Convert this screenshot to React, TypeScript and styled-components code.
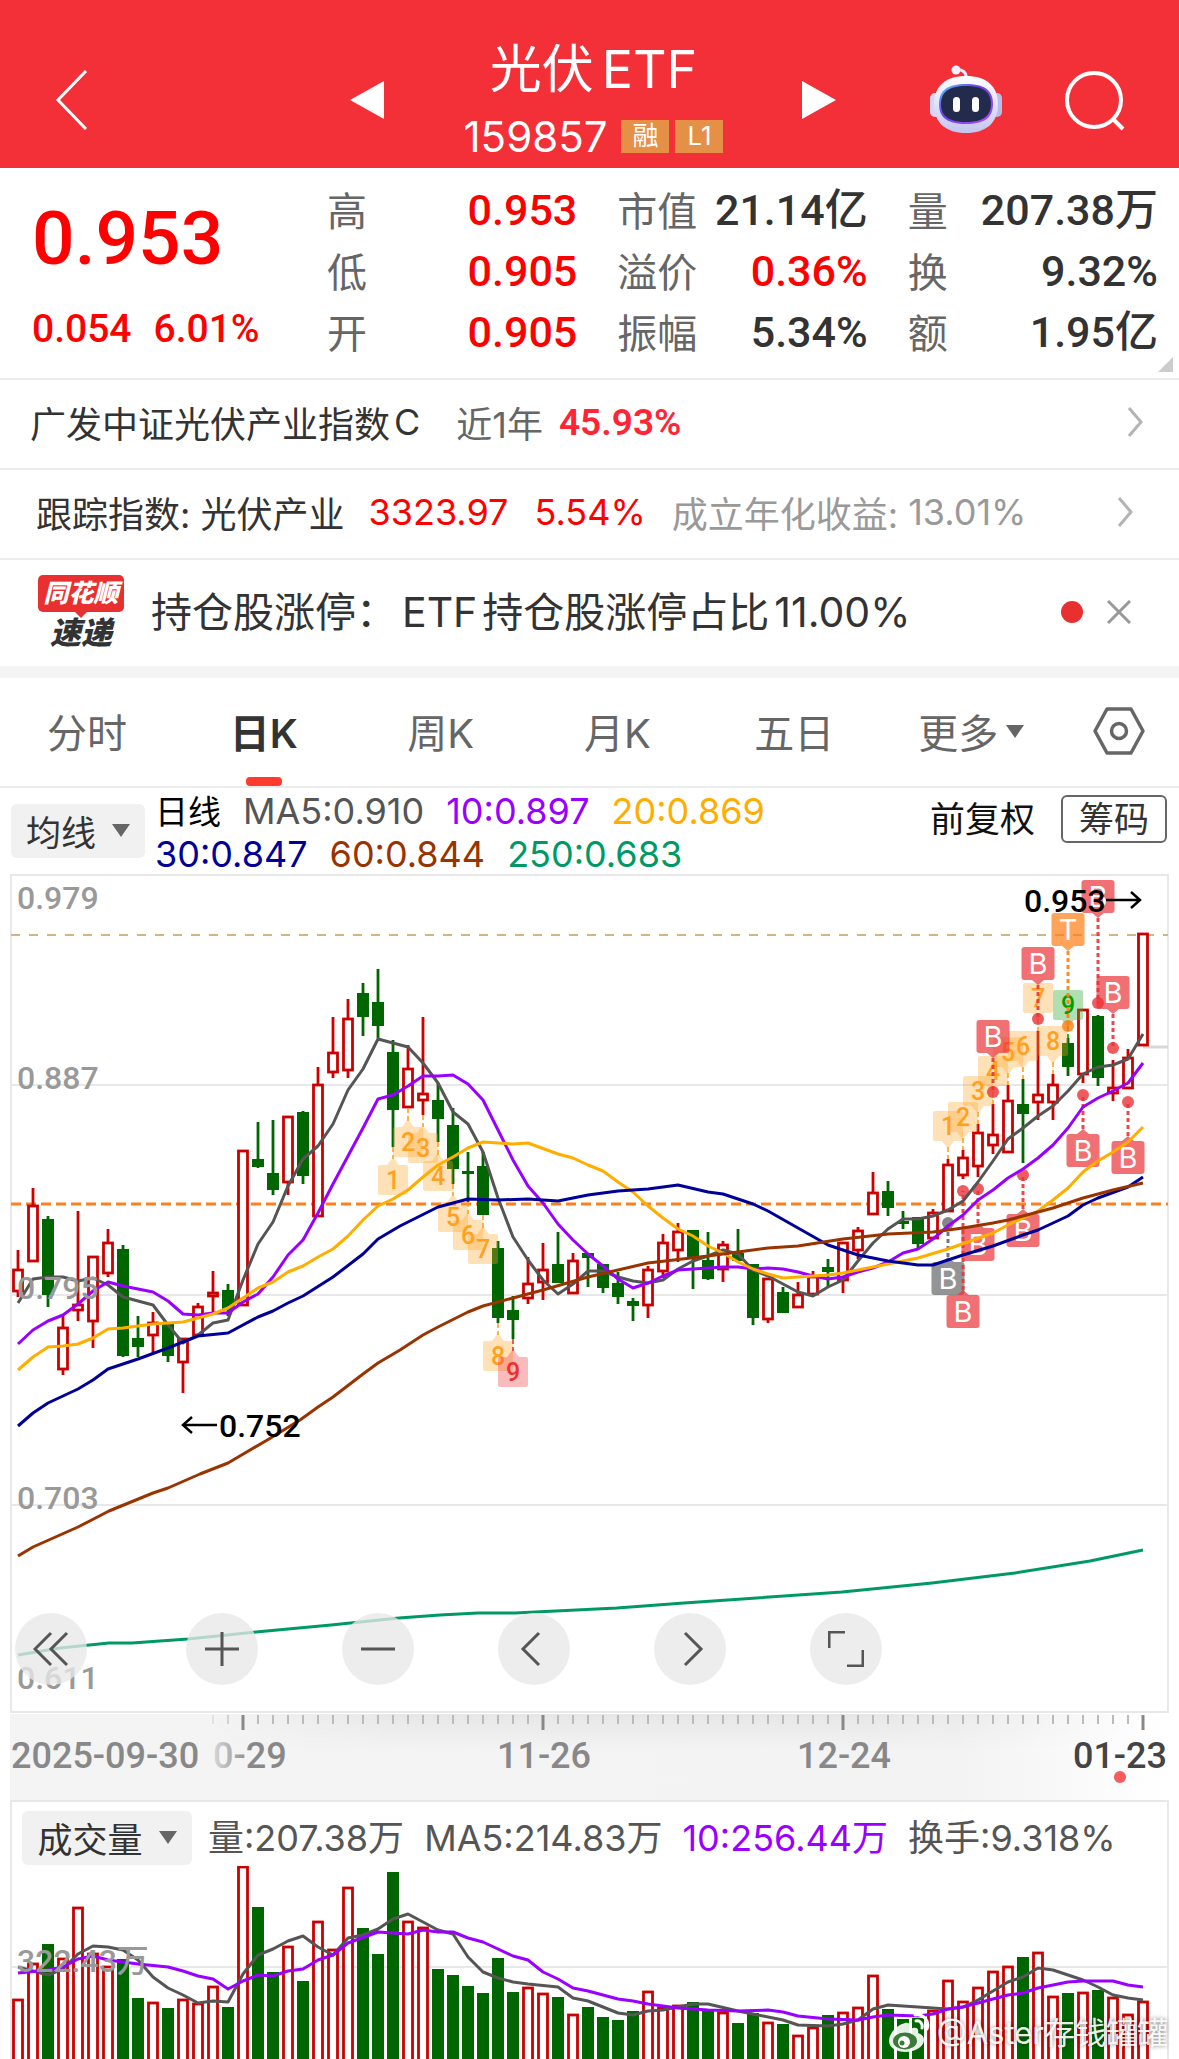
import React from "react";
import styled, { createGlobalStyle } from "styled-components";

const GlobalStyle = createGlobalStyle`
  * { box-sizing: border-box; }
  body { margin: 0; background: #fff; }
  button { border: 0; padding: 0; margin: 0; background: none; font: inherit; color: inherit; cursor: pointer; }
  svg { display: block; }
`;

const UI = `Inter, "Noto Sans CJK SC", sans-serif`;
const NUM = `Roboto, "Noto Sans CJK SC", sans-serif`;
const RED = "#ff0000";

const Page = styled.main`
  font-family: ${UI};
  color: #333;
  background: #fff;
  overflow: hidden;
`;

/* ---------- header ---------- */
const Header = styled.header`
  display: grid;
  grid-template-columns: 1fr 494px 1fr;
  height: 168px;
  padding-top: 36px;
  background: #f32f38;
  color: #fff;
`;
const HeaderSide = styled.div<{ $end?: boolean }>`
  display: flex;
  align-items: center;
  justify-content: ${(p) => (p.$end ? "flex-end" : "flex-start")};
  gap: 62px;
  padding: 0 53px 4px;
`;
const HeaderMiddle = styled.div`
  display: flex;
  align-items: center;
  justify-content: space-between;
`;
const StepButton = styled.button`
  padding-bottom: 4px;
`;
const TitleBlock = styled.div`
  display: flex;
  flex-direction: column;
  align-items: center;
`;
const Title = styled.h1`
  display: flex;
  gap: 8px;
  margin: 0;
  font-size: 52px;
  line-height: 68px;
  font-weight: 400;
`;
const CodeLine = styled.div`
  display: flex;
  align-items: center;
  gap: 6px;
  height: 64px;
  font-size: 42px;
`;
const Code = styled.span`
  margin-right: 8px;
`;
const Badge = styled.span`
  width: 48px;
  height: 33px;
  line-height: 32px;
  font-size: 26px;
  text-align: center;
  background: #e68f46;
`;

/* ---------- quote ---------- */
const Quote = styled.section`
  position: relative;
  display: flex;
  height: 212px;
  padding: 14px 21px 0 32px;
  border-bottom: 2px solid #ececec;
  font-family: ${NUM};
`;
const Primary = styled.div`
  width: 295px;
  color: ${RED};
  font-weight: 500;
`;
const BigPrice = styled.div`
  font-size: 75px;
  line-height: 112px;
`;
const Change = styled.div`
  display: flex;
  gap: 22px;
  font-size: 39px;
  line-height: 70px;
`;
const Stats = styled.dl`
  flex: 1;
  display: grid;
  grid-template-columns: repeat(3, 1fr);
  grid-auto-rows: 61px;
  column-gap: 40px;
  margin: 0;
`;
const Stat = styled.div`
  display: flex;
  justify-content: space-between;
  align-items: center;
  white-space: nowrap;
`;
const StatName = styled.dt`
  font-size: 40px;
  line-height: 60px;
  color: #666;
`;
const StatValue = styled.dd<{ $up?: boolean }>`
  margin: 0;
  padding-bottom: 5px;
  font-size: 43px;
  line-height: 56px;
  font-weight: 500;
  color: ${(p) => (p.$up ? RED : "#333")};
`;
const Corner = styled.i`
  position: absolute;
  right: 6px;
  bottom: 6px;
  border-left: 15px solid transparent;
  border-bottom: 15px solid #ccc;
`;

/* ---------- link rows ---------- */
const LinkRow = styled.a<{ $inset?: boolean }>`
  display: flex;
  align-items: center;
  height: 90px;
  padding: ${(p) => (p.$inset ? "0 46px 4px 36px" : "0 36px 4px 30px")};
  border-bottom: 2px solid #ececec;
  color: #333;
  font-size: 36px;
  text-decoration: none;
  white-space: nowrap;
`;
const RowText = styled.span<{ $color?: string; $gap?: number; $num?: boolean }>`
  margin-right: ${(p) => p.$gap ?? 0}px;
  color: ${(p) => p.$color ?? "#333"};
  ${(p) => p.$num && `font-family: ${NUM}; font-weight: 600; font-size: 37px;`}
`;
const RowIcon = styled.span`
  margin-left: auto;
`;
const Notice = styled.section`
  display: flex;
  align-items: center;
  height: 118px;
  padding: 0 48px 2px 37px;
  border-bottom: 12px solid #f4f4f4;
`;
const Brand = styled.div`
  display: flex;
  flex-direction: column;
  align-items: center;
  width: 88px;
  margin-right: 26px;
  font-style: italic;
  font-weight: 900;
`;
const BrandTop = styled.span`
  position: relative;
  width: 86px;
  height: 37px;
  line-height: 36px;
  border-radius: 5px;
  background: #e83030;
  color: #fff;
  font-size: 25px;
  text-align: center;
  &::after {
    content: "";
    position: absolute;
    left: 37px;
    top: 37px;
    border: 6px solid transparent;
    border-top-color: #e83030;
  }
`;
const BrandBottom = styled.span`
  padding-top: 4px;
  font-size: 31px;
  line-height: 34px;
`;
const NoticeText = styled.span`
  display: flex;
  gap: 5px;
  font-size: 41px;
  line-height: 60px;
  white-space: nowrap;
`;
const Dot = styled.i`
  width: 22px;
  height: 22px;
  margin: 0 24px 0 auto;
  border-radius: 50%;
  background: #e83030;
`;

/* ---------- tabs ---------- */
const Tabs = styled.nav`
  display: grid;
  grid-template-columns: repeat(6, 15%) 10%;
  height: 110px;
  border-bottom: 2px solid #ececec;
`;
const Tab = styled.button<{ $active?: boolean }>`
  position: relative;
  display: flex;
  align-items: center;
  justify-content: center;
  gap: 8px;
  padding: 0 3px 2px 0;
  font-size: 40px;
  color: ${(p) => (p.$active ? "#333" : "#666")};
  font-weight: ${(p) => (p.$active ? 600 : 400)};
  &::after {
    content: "";
    display: ${(p) => (p.$active ? "block" : "none")};
    position: absolute;
    bottom: 0;
    width: 36px;
    height: 9px;
    border-radius: 4px;
    background: #ff3b30;
  }
`;
const Caret = styled.i`
  border: 9px solid transparent;
  border-top: 13px solid #666;
  border-bottom: 0;
`;

/* ---------- indicators ---------- */
const Indicators = styled.div`
  display: flex;
  height: 86px;
  padding: 0 12px 0 11px;
`;
const Picker = styled.button<{ $w: number }>`
  display: flex;
  align-items: center;
  justify-content: center;
  gap: 16px;
  flex: none;
  width: ${(p) => p.$w}px;
  height: 54px;
  padding-bottom: 2px;
  border-radius: 6px;
  background: #f1f1f1;
  font-size: 35px;
`;
const PickerSlot = styled.div`
  padding: 16px 10px 0 0;
`;
const Legend = styled.div`
  flex: 1;
  padding-top: 2px;
`;
const LegendLine = styled.div<{ $gap?: number }>`
  display: flex;
  align-items: baseline;
  gap: ${(p) => p.$gap ?? 22}px;
  font-size: 36px;
  line-height: 42px;
  white-space: nowrap;
`;
const Tint = styled.span<{ $c: string }>`
  color: ${(p) => p.$c};
`;
const Period = styled.span`
  font-size: 33px;
  color: #000;
`;
const Adjust = styled.button`
  height: 56px;
  margin-right: 26px;
  font-size: 35px;
  color: #111;
`;
const ChipButton = styled.button`
  width: 106px;
  height: 48px;
  margin-top: 7px;
  border: 2px solid #666;
  border-radius: 6px;
  font-size: 35px;
  line-height: 38px;
`;

/* ---------- charts ---------- */
const ChartBox = styled.section`
  position: relative;
`;
const Drawing = styled.svg`
  width: 100%;
  height: auto;
  font-family: ${NUM};
`;
const Controls = styled.div`
  position: absolute;
  left: 15px;
  bottom: 29px;
  display: flex;
  gap: 84px;
`;
const RoundButton = styled.button<{ $first?: boolean }>`
  display: flex;
  align-items: center;
  justify-content: center;
  width: 72px;
  height: 72px;
  margin-right: ${(p) => (p.$first ? 15 : 0)}px;
  border-radius: 50%;
  background: rgba(232, 232, 232, 0.78);
`;
const VolumeHead = styled.div`
  display: flex;
  align-items: flex-start;
  height: 66px;
  margin: 0 10px;
  padding: 9px 0 0 10px;
  border: 2px solid #e8e8e8;
  border-bottom: 0;
`;
const VolumeLegend = styled(LegendLine)`
  padding: 6px 0 0 16px;
  color: #555;
`;
const Watermark = styled.div`
  position: absolute;
  right: 11px;
  bottom: 2px;
  display: flex;
  align-items: center;
  gap: 7px;
  font-size: 31px;
  line-height: 48px;
  color: rgba(255, 255, 255, 0.92);
  text-shadow: 0 0 4px rgba(0, 0, 0, 0.5);
`;

/* ---------- data ---------- */
/* direction, high, body top, body bottom, low, volume bar top */
type Candle = [string, number, number, number, number, number];
const candles: Candle[] = [
  ["r", 1250, 1269, 1292, 1297, 1999], ["r", 1188, 1205, 1262, 1262, 1963], ["g", 1216, 1219, 1295, 1307, 1944],
  ["r", 1315, 1327, 1370, 1375, 1958], ["r", 1211, 1304, 1311, 1321, 1907], ["r", 1256, 1256, 1322, 1348, 1953],
  ["r", 1229, 1242, 1274, 1277, 1966], ["g", 1245, 1249, 1356, 1357, 1959], ["g", 1316, 1338, 1347, 1357, 1998],
  ["r", 1312, 1322, 1336, 1353, 2002], ["g", 1324, 1324, 1356, 1362, 2008], ["r", 1338, 1338, 1363, 1393, 1999],
  ["r", 1303, 1306, 1336, 1336, 2003], ["r", 1271, 1292, 1297, 1312, 1986], ["g", 1284, 1290, 1310, 1316, 2007],
  ["r", 1150, 1150, 1306, 1306, 1866], ["g", 1122, 1159, 1167, 1168, 1907], ["g", 1120, 1173, 1190, 1195, 1972],
  ["r", 1116, 1116, 1183, 1195, 1946], ["g", 1111, 1112, 1176, 1184, 1981], ["r", 1067, 1084, 1217, 1217, 1921],
  ["r", 1017, 1052, 1073, 1078, 1949], ["r", 999, 1018, 1071, 1078, 1887], ["g", 983, 993, 1017, 1036, 1928],
  ["g", 969, 1002, 1026, 1038, 1954], ["g", 1040, 1052, 1110, 1147, 1872], ["r", 1045, 1068, 1108, 1108, 1921],
  ["r", 1017, 1093, 1101, 1115, 1927], ["g", 1083, 1100, 1119, 1142, 1969], ["g", 1108, 1125, 1169, 1184, 1975],
  ["g", 1152, 1171, 1174, 1202, 1986], ["g", 1152, 1166, 1215, 1215, 1993], ["g", 1241, 1248, 1318, 1323, 1958],
  ["g", 1296, 1310, 1320, 1339, 1992], ["r", 1257, 1283, 1299, 1304, 1987], ["r", 1243, 1269, 1283, 1300, 1993],
  ["g", 1232, 1264, 1283, 1283, 1997], ["r", 1253, 1260, 1294, 1294, 2014], ["g", 1253, 1253, 1258, 1287, 2007],
  ["g", 1264, 1264, 1288, 1293, 2017], ["g", 1272, 1283, 1297, 1304, 2020], ["g", 1298, 1301, 1306, 1321, 2011],
  ["r", 1266, 1269, 1306, 1318, 1991], ["r", 1234, 1242, 1272, 1278, 2007], ["r", 1223, 1231, 1251, 1262, 2005],
  ["g", 1230, 1230, 1258, 1289, 2002], ["g", 1232, 1260, 1279, 1280, 2009], ["r", 1241, 1244, 1270, 1282, 2012],
  ["g", 1229, 1253, 1261, 1261, 2023], ["g", 1264, 1264, 1318, 1325, 2013], ["r", 1278, 1278, 1320, 1323, 2022],
  ["g", 1287, 1292, 1313, 1313, 2024], ["r", 1282, 1294, 1308, 1308, 2035], ["r", 1271, 1276, 1295, 1295, 2027],
  ["g", 1259, 1267, 1272, 1287, 2015], ["r", 1242, 1242, 1281, 1293, 2012], ["r", 1227, 1230, 1251, 1259, 2007],
  ["r", 1172, 1192, 1215, 1215, 1975], ["g", 1181, 1191, 1208, 1216, 2009], ["g", 1211, 1221, 1224, 1229, 2019],
  ["g", 1217, 1217, 1244, 1248, 2018], ["r", 1209, 1212, 1239, 1239, 2010], ["r", 1159, 1164, 1212, 1212, 1980],
  ["r", 1150, 1157, 1176, 1179, 2001], ["r", 1124, 1132, 1167, 1177, 1987], ["r", 1104, 1134, 1146, 1154, 1971],
  ["r", 1085, 1100, 1153, 1153, 1966], ["g", 1079, 1104, 1114, 1163, 1957], ["r", 1031, 1094, 1103, 1120, 1952],
  ["r", 1074, 1084, 1103, 1120, 1996], ["g", 1038, 1043, 1067, 1076, 1993], ["r", 1009, 1009, 1075, 1083, 1992],
  ["g", 1015, 1016, 1078, 1086, 1990], ["r", 1060, 1087, 1094, 1101, 1997], ["r", 1049, 1057, 1089, 1089, 2014],
  ["r", 933, 933, 1046, 1046, 2001],
];
const cx = (i: number) => 18 + 15 * i;

const priceLines = [
  { c: "#009966", d: "18,1655 60,1648 109,1643 132,1643 188,1639 256,1632 331,1625 399,1618 440,1615 478,1613 515,1613 617,1608 684,1603 842,1592 932,1583 1015,1573 1090,1561 1143,1550" },
  { c: "#555", d: "18,1303 33,1279 48,1277 63,1277 78,1281 93,1278 108,1285 123,1297 138,1301 153,1305 168,1325 183,1343 198,1335 213,1323 228,1320 243,1280 258,1244 273,1222 288,1186 303,1159 318,1146 333,1124 348,1090 363,1069 378,1039 393,1043 408,1047 423,1063 438,1083 453,1112 468,1124 483,1152 498,1198 513,1237 528,1260 543,1280 558,1294 573,1284 588,1271 603,1271 618,1277 633,1281 648,1283 663,1280 678,1269 693,1261 708,1256 723,1250 738,1254 753,1270 768,1276 783,1284 798,1292 813,1296 828,1287 843,1280 858,1261 873,1243 888,1229 903,1219 918,1219 933,1216 948,1210 963,1201 978,1182 993,1161 1008,1139 1023,1128 1038,1116 1053,1106 1068,1091 1083,1074 1098,1067 1113,1065 1128,1059 1143,1034" },
  { c: "#9900ff", d: "18,1344 33,1330 48,1321 63,1315 78,1304 93,1291 108,1282 123,1286 138,1289 153,1292 168,1301 183,1314 198,1315 213,1313 228,1313 243,1302 258,1294 273,1277 288,1255 303,1240 318,1213 333,1184 348,1156 363,1128 378,1099 393,1095 408,1086 423,1076 438,1076 453,1075 468,1084 483,1100 498,1130 513,1160 528,1186 543,1203 558,1224 573,1240 588,1254 603,1266 618,1279 633,1288 648,1283 663,1276 678,1270 693,1269 708,1268 723,1267 738,1267 753,1269 768,1268 783,1269 798,1272 813,1276 828,1279 843,1277 858,1272 873,1268 888,1262 903,1253 918,1249 933,1239 948,1226 963,1215 978,1200 993,1190 1008,1178 1023,1169 1038,1158 1053,1145 1068,1128 1083,1107 1098,1098 1113,1091 1128,1083 1143,1063" },
  { c: "#ffae00", d: "18,1370 33,1357 48,1347 63,1346 78,1344 93,1338 108,1329 123,1328 138,1326 153,1324 183,1322 198,1318 213,1314 228,1308 243,1298 258,1288 273,1282 288,1272 303,1266 318,1257 333,1249 348,1236 363,1220 378,1206 393,1199 408,1190 423,1177 438,1165 453,1157 468,1148 483,1142 513,1144 528,1143 558,1154 573,1158 588,1165 603,1171 618,1182 633,1192 648,1206 663,1218 678,1229 693,1236 708,1246 723,1253 738,1262 753,1269 768,1274 783,1278 798,1277 828,1275 843,1273 888,1264 918,1258 948,1249 993,1233 1008,1225 1038,1211 1053,1200 1068,1188 1083,1172 1098,1161 1113,1152 1128,1142 1143,1127" },
  { c: "#000099", d: "18,1426 33,1413 48,1403 63,1396 78,1389 93,1380 108,1369 138,1359 168,1348 198,1336 228,1333 258,1317 273,1311 288,1303 303,1296 333,1277 363,1254 378,1239 400,1226 438,1207 468,1199 498,1200 528,1199 558,1201 588,1195 618,1191 648,1189 678,1185 708,1192 723,1194 753,1204 768,1211 798,1228 828,1245 858,1255 888,1261 918,1265 933,1265 963,1255 993,1246 1023,1235 1038,1230 1068,1216 1083,1205 1098,1198 1128,1187 1143,1177" },
  { c: "#993300", d: "18,1556 33,1547 78,1527 109,1511 153,1493 168,1488 200,1474 228,1463 269,1439 300,1420 318,1407 333,1397 363,1374 378,1363 400,1350 423,1335 438,1327 468,1312 483,1306 513,1298 543,1290 588,1277 648,1263 708,1256 738,1252 768,1248 798,1246 843,1239 888,1234 933,1232 963,1228 993,1223 1008,1220 1053,1208 1083,1198 1113,1190 1143,1183" },
];
const volumeLines = [
  { c: "#555", d: "18,1967 48,1975 63,1969 78,1954 93,1946 108,1947 123,1950 138,1960 153,1977 168,1988 183,1995 198,2003 213,2001 228,2002 243,1974 258,1955 273,1949 288,1941 303,1936 318,1947 333,1955 348,1938 363,1935 378,1929 393,1919 408,1914 423,1922 438,1930 453,1934 468,1957 483,1972 498,1978 513,1982 528,1984 558,1987 573,1998 588,2001 603,2007 618,2013 633,2015 648,2011 663,2010 678,2007 693,2004 708,2004 738,2011 753,2014 783,2020 798,2025 828,2026 843,2024 858,2020 873,2009 888,2005 918,2007 948,2009 963,2007 978,2000 993,1991 1008,1982 1023,1977 1038,1968 1053,1970 1083,1980 1098,1987 1113,1995 1128,1998 1143,2000" },
  { c: "#9900ff", d: "18,1973 48,1970 63,1967 78,1959 93,1956 108,1960 138,1964 168,1967 183,1971 198,1976 213,1979 228,1989 243,1981 258,1975 273,1976 288,1971 303,1969 318,1960 333,1955 348,1943 378,1932 408,1934 423,1930 438,1932 453,1932 468,1938 483,1942 513,1956 528,1960 543,1972 558,1979 573,1988 588,1991 618,1999 633,2001 648,2004 678,2008 708,2010 738,2011 768,2010 783,2012 798,2016 828,2019 858,2020 873,2017 888,2015 918,2016 933,2014 948,2009 963,2007 993,1999 1008,1995 1023,1993 1038,1988 1068,1982 1083,1981 1113,1981 1128,1985 1143,1987" },
];

/* candle index, box top, text, tone; boxes below their candle point up */
const counts: [number, number, string, string, boolean][] = [
  [25, 1165, "1", "o", true], [26, 1127, "2", "o", true], [27, 1133, "3", "o", true], [28, 1161, "4", "o", true],
  [29, 1202, "5", "o", true], [30, 1220, "6", "o", true], [31, 1234, "7", "o", true], [32, 1341, "8", "o", true],
  [33, 1357, "9", "r", true], [62, 1111, "1", "o", false], [63, 1102, "2", "o", false], [64, 1076, "3", "o", false],
  [65, 1056, "4", "o", false], [66, 1037, "5", "o", false], [67, 1031, "6", "o", false], [68, 983, "7", "o", false],
  [69, 1026, "8", "o", false], [70, 990, "9", "g", false],
];
const countTone: Record<string, [string, string]> = {
  o: ["rgba(255,165,40,0.33)", "#ffa01e"],
  r: ["rgba(240,60,65,0.35)", "#ee2f2f"],
  g: ["rgba(60,175,60,0.4)", "#00a000"],
};

/* candle index, dot centre, box top, letter, colour */
const trades: [number, number, number, string, string][] = [
  [65, 1092, 1020, "B", "#ea3338"], [68, 1019, 947, "B", "#ea3338"], [70, 1026, 913, "T", "#ff7d12"],
  [72, 1003, 880, "B", "#ea3338"], [73, 1048, 976, "B", "#ea3338"], [71, 1095, 1134, "B", "#ea3338"],
  [74, 1102, 1141, "B", "#ea3338"], [64, 1189, 1228, "B", "#ea3338"], [67, 1175, 1214, "B", "#ea3338"],
  [62, 1223, 1262, "B", "#666"], [63, 1191, 1295, "B", "#ea3338"],
];

const scale = [
  ["0.979", 909], ["0.887", 1089], ["0.795", 1299], ["0.703", 1509], ["0.611", 1689],
] as const;

function Bar({ x, top, bottom, up }: { x: number; top: number; bottom: number; up: boolean }) {
  return up ? (
    <rect x={x - 4.5} y={top + 1} width={9} height={Math.max(bottom - top - 2, 1)} fill="#fff" stroke="#cc0000" strokeWidth={2.8} />
  ) : (
    <rect x={x - 6} y={top} width={12} height={bottom - top} fill="#006600" />
  );
}

function PriceChart() {
  return (
    <Drawing viewBox="0 874 1179 840" role="img" aria-label="日K线图">
      <g stroke="#e8e8e8" strokeWidth={2} fill="none">
        <rect x={11} y={875} width={1157} height={837} />
        <path d="M12 1085H1167M12 1295H1167M12 1505H1167" />
      </g>
      <path d="M11 935H1168" stroke="#d6b382" strokeWidth={2} strokeDasharray="9 9" />
      <path d="M11 1204H1168" stroke="#ff7f1e" strokeWidth={3} strokeDasharray="10 5" />
      <path d="M1143 1047H1168" stroke="#d8d8d8" strokeWidth={3} />
      {candles.map(([t, h, a, b, l], i) => (
        <g key={i}>
          <path d={`M${cx(i)} ${h}V${a}M${cx(i)} ${b}V${l}`} stroke={t === "r" ? "#cc0000" : "#006600"} strokeWidth={2.8} />
          <Bar x={cx(i)} top={a} bottom={b} up={t === "r"} />
        </g>
      ))}
      {counts.map(([i, y, n, tone, below]) => {
        const x = cx(i);
        const [bg, fg] = countTone[tone];
        const tip = below
          ? `M${x - 6} ${y}L${x} ${y - 8}L${x + 6} ${y}Z`
          : `M${x - 6} ${y + 30}L${x} ${y + 38}L${x + 6} ${y + 30}Z`;
        const stem = below ? `M${x} ${candles[i][4]}V${y - 6}` : `M${x} ${y + 36}V${candles[i][1]}`;
        return (
          <g key={i}>
            <path d={stem} stroke={fg} strokeOpacity={0.8} strokeWidth={2} strokeDasharray="5 3" />
            <rect x={x - 15} y={y} width={30} height={30} rx={2} fill={bg} />
            <path d={tip} fill={bg} />
            <text x={x} y={y + 24} fontSize={25} fontWeight={500} textAnchor="middle" fill={fg}>{n}</text>
          </g>
        );
      })}
      {trades.map(([i, dot, y, letter, color]) => {
        const x = cx(i);
        const above = y < dot;
        const edge = above ? y + 33 : y;
        const tip = above ? edge + 5 : edge - 5;
        return (
          <g key={i}>
            <path d={`M${x} ${tip}V${dot}`} stroke={color} strokeOpacity={0.9} strokeWidth={3} strokeDasharray="4 3" />
            <circle cx={x} cy={dot} r={6} fill={color} fillOpacity={0.8} />
            <g fill={color} fillOpacity={0.7}>
              <rect x={x - 16.5} y={y} width={33} height={33} rx={3} />
              <path d={`M${x - 6} ${edge}L${x} ${tip}L${x + 6} ${edge}Z`} />
            </g>
            <text x={x} y={y + 27} fontSize={29} textAnchor="middle" fill="#fff" fontFamily="Inter, sans-serif">{letter}</text>
          </g>
        );
      })}
      {priceLines.map((l) => (
        <polyline key={l.c} points={l.d} fill="none" stroke={l.c} strokeWidth={3} strokeLinejoin="round" />
      ))}
      <g fontSize={32} fontWeight={500} fill="#999">
        {scale.map(([t, y]) => (
          <text key={t} x={17} y={y}>{t}</text>
        ))}
      </g>
      <g fontSize={32} fontWeight={500} fill="#000">
        <text x={1024} y={912}>0.953</text>
        <text x={219} y={1437}>0.752</text>
      </g>
      <g stroke="#000" strokeWidth={2.5} fill="none">
        <path d="M1106 900H1140M1131 892L1140 900L1131 908" />
        <path d="M217 1425H183M192 1417L183 1425L192 1433" />
      </g>
    </Drawing>
  );
}

function DateAxis() {
  const ticks = Array.from({ length: 63 }, (_, k) => k + 13);
  return (
    <Drawing viewBox="0 1714 1179 86" role="img" aria-label="日期">
      <defs>
        <linearGradient id="band" x1="0" x2="1" y1="0" y2="0">
          <stop offset="0" stopColor="#f4f4f4" />
          <stop offset="0.82" stopColor="#f3f3f3" />
          <stop offset="1" stopColor="#fff" />
        </linearGradient>
        <linearGradient id="shade" x1="0" x2="0" y1="0" y2="1">
          <stop offset="0" stopColor="#000" stopOpacity="0.05" />
          <stop offset="0.6" stopColor="#000" stopOpacity="0" />
        </linearGradient>
        <linearGradient id="edges" x1="0" x2="1" y1="0" y2="0">
          <stop offset="0" stopColor="#000" />
          <stop offset="0.2" stopColor="#fff" />
          <stop offset="0.7" stopColor="#fff" />
          <stop offset="1" stopColor="#000" />
        </linearGradient>
        <mask id="soft">
          <rect x={210} y={1714} width={930} height={60} fill="url(#edges)" />
        </mask>
        <linearGradient id="fade" gradientUnits="userSpaceOnUse" x1="205" x2="250" y1="0" y2="0">
          <stop offset="0" stopColor="#888" stopOpacity="0.1" />
          <stop offset="1" stopColor="#888" />
        </linearGradient>
      </defs>
      <rect x={10} y={1714} width={1159} height={86} fill="url(#band)" />
      <rect x={210} y={1714} width={930} height={60} fill="url(#shade)" mask="url(#soft)" />
      {ticks.map((i) => {
        const major = i % 20 === 15;
        return (
          <path
            key={i}
            d={`M${cx(i)} 1715V${major ? 1730 : 1724}`}
            stroke={major ? "#888" : "#bbb"}
            strokeWidth={major ? 3 : 2}
            strokeOpacity={i < 14 ? 0.3 : i < 15 ? 0.6 : 1}
          />
        );
      })}
      <g fontSize={36} fontWeight={500} fill="#888">
        <text x={11} y={1768}>2025-09-30</text>
        <text x={213} y={1768} fill="url(#fade)">0-29</text>
        <text x={544} y={1768} textAnchor="middle">11-26</text>
        <text x={844} y={1768} textAnchor="middle">12-24</text>
        <text x={1167} y={1768} textAnchor="end" fill="#444">01-23</text>
      </g>
      <circle cx={1120} cy={1777} r={6} fill="#f65c5c" />
    </Drawing>
  );
}

function VolumeChart() {
  return (
    <Drawing viewBox="0 1866 1179 193" role="img" aria-label="成交量图">
      <path d="M11 1866V2059M1168 1866V2059M12 1967H1167" stroke="#e8e8e8" strokeWidth={2} />
      {candles.map(([t, , , , , top], i) => (
        <Bar key={i} x={cx(i)} top={top} bottom={2064} up={t === "r"} />
      ))}
      {volumeLines.map((l) => (
        <polyline key={l.c} points={l.d} fill="none" stroke={l.c} strokeWidth={3} strokeLinejoin="round" />
      ))}
      <text x={17} y={1972} fontSize={32} fontWeight={500} fill="#999">322.43万</text>
    </Drawing>
  );
}

function Robot() {
  return (
    <svg width="72" height="70" viewBox="0 0 72 70">
      <defs>
        <linearGradient id="shell" x1="0" x2="0" y1="0" y2="1">
          <stop offset="0" stopColor="#ffffff" />
          <stop offset="1" stopColor="#c3c6ee" />
        </linearGradient>
        <linearGradient id="rim" x1="0" x2="1" y1="0" y2="1">
          <stop offset="0" stopColor="#4fd0ff" />
          <stop offset="0.4" stopColor="#6a3fe8" />
          <stop offset="1" stopColor="#b04cff" />
        </linearGradient>
      </defs>
      <path d="M36 14C37 7 32 4 26 5" fill="none" stroke="#e9eaff" strokeWidth="3" />
      <circle cx="26" cy="5" r="4.500" fill="#f0f0ff" />
      <rect x="0" y="28" width="10" height="24" rx="5" fill="#d5d6f5" />
      <rect x="62" y="28" width="10" height="24" rx="5" fill="#b9bbea" />
      <path d="M36 11C56 11 68 21 68 39C68 58 56 68 36 68C16 68 4 58 4 39C4 21 16 11 36 11Z" fill="url(#shell)" />
      <path d="M36 19C54 19 63 25 63 39C63 53 54 59 36 59C18 59 9 53 9 39C9 25 18 19 36 19Z" fill="url(#rim)" />
      <path d="M36 21C53 21 61 27 61 39C61 51 53 57 36 57C19 57 11 51 11 39C11 27 19 21 36 21Z" fill="#232b4d" />
      <rect x="23" y="32" width="7" height="15" rx="3.500" fill="#fff" />
      <rect x="42" y="32" width="7" height="15" rx="3.500" fill="#fff" />
    </svg>
  );
}

const Chevron = () => (
  <svg width="16" height="32" viewBox="0 0 16 32" fill="none" stroke="#b3b3b3" strokeWidth="3">
    <path d="M2 2L14 16L2 30" />
  </svg>
);

const icons: [string, string][] = [
  ["展开", "M18 2L2 18L18 34M34 2L18 18L34 34"],
  ["放大", "M18 1V35M1 18H35"],
  ["缩小", "M1 18H35"],
  ["左移", "M23 2L7 18L23 34"],
  ["右移", "M13 2L29 18L13 34"],
  ["全屏", "M17 1H1V17M19 35H35V19"],
];

const stats: [string, string, boolean][] = [
  ["高", "0.953", true], ["市值", "21.14亿", false], ["量", "207.38万", false],
  ["低", "0.905", true], ["溢价", "0.36%", true], ["换", "9.32%", false],
  ["开", "0.905", true], ["振幅", "5.34%", false], ["额", "1.95亿", false],
];

export default function App() {
  return (
    <Page>
      <GlobalStyle />
      <Header>
        <HeaderSide>
          <button aria-label="返回">
            <svg width="36" height="62" viewBox="0 0 36 62" fill="none" stroke="#fff" strokeWidth="3">
              <path d="M33 2L5 31L33 60" />
            </svg>
          </button>
        </HeaderSide>
        <HeaderMiddle>
          <StepButton aria-label="上一个">
            <svg width="42" height="38" viewBox="0 0 42 38" fill="#fff"><path d="M41 0V38L7 19Z" /></svg>
          </StepButton>
          <TitleBlock>
            <Title><span>光伏</span><span>ETF</span></Title>
            <CodeLine><Code>159857</Code><Badge>融</Badge><Badge>L1</Badge></CodeLine>
          </TitleBlock>
          <StepButton aria-label="下一个">
            <svg width="34" height="38" viewBox="0 0 34 38" fill="#fff"><path d="M0 0V38L34 19Z" /></svg>
          </StepButton>
        </HeaderMiddle>
        <HeaderSide $end>
          <button aria-label="智能助手"><Robot /></button>
          <button aria-label="搜索">
            <svg width="62" height="62" viewBox="0 0 62 62" fill="none" stroke="#fff" strokeWidth="4">
              <circle cx="30" cy="31" r="27" />
              <path d="M49 50L59 60" />
            </svg>
          </button>
        </HeaderSide>
      </Header>

      <Quote>
        <Primary>
          <BigPrice>0.953</BigPrice>
          <Change><span>0.054</span><span>6.01%</span></Change>
        </Primary>
        <Stats>
          {stats.map(([name, value, up]) => (
            <Stat key={name}>
              <StatName>{name}</StatName>
              <StatValue $up={up}>{value}</StatValue>
            </Stat>
          ))}
        </Stats>
        <Corner />
      </Quote>

      <LinkRow href="#fund">
        <RowText $gap={4}>广发中证光伏产业指数</RowText>
        <RowText $gap={36}>C</RowText>
        <RowText $color="#666" $gap={16}>近1年</RowText>
        <RowText $color="#ff2436" $num>45.93%</RowText>
        <RowIcon><Chevron /></RowIcon>
      </LinkRow>
      <LinkRow href="#index" $inset>
        <RowText $gap={24}>跟踪指数: 光伏产业</RowText>
        <RowText $color={RED} $gap={26}>3323.97</RowText>
        <RowText $color={RED} $gap={26}>5.54%</RowText>
        <RowText $color="#999" $gap={10}>成立年化收益:</RowText>
        <RowText $color="#999">13.01%</RowText>
        <RowIcon><Chevron /></RowIcon>
      </LinkRow>

      <Notice>
        <Brand><BrandTop>同花顺</BrandTop><BrandBottom>速递</BrandBottom></Brand>
        <NoticeText>
          <span>持仓股涨停：</span><span>ETF</span><span>持仓股涨停占比</span><span>11.00%</span>
        </NoticeText>
        <Dot />
        <button aria-label="关闭">
          <svg width="24" height="24" viewBox="0 0 24 24" stroke="#999" strokeWidth="3"><path d="M1 1L23 23M23 1L1 23" /></svg>
        </button>
      </Notice>

      <Tabs>
        <Tab>分时</Tab>
        <Tab $active>日K</Tab>
        <Tab>周K</Tab>
        <Tab>月K</Tab>
        <Tab>五日</Tab>
        <Tab>更多<Caret /></Tab>
        <Tab aria-label="设置">
          <svg width="52" height="48" viewBox="0 0 52 48" fill="none" stroke="#666" strokeWidth="3.500" strokeLinejoin="round">
            <path d="M14 2H38L50 24L38 46H14L2 24Z" />
            <circle cx="26" cy="24" r="7.500" />
          </svg>
        </Tab>
      </Tabs>

      <Indicators>
        <PickerSlot><Picker $w={134}>均线<Caret /></Picker></PickerSlot>
        <Legend>
          <LegendLine>
            <Period>日线</Period><Tint $c="#555">MA5:0.910</Tint><Tint $c="#9900ff">10:0.897</Tint><Tint $c="#ffae00">20:0.869</Tint>
          </LegendLine>
          <LegendLine>
            <Tint $c="#000099">30:0.847</Tint><Tint $c="#993300">60:0.844</Tint><Tint $c="#009966">250:0.683</Tint>
          </LegendLine>
        </Legend>
        <Adjust>前复权</Adjust>
        <ChipButton>筹码</ChipButton>
      </Indicators>

      <ChartBox>
        <PriceChart />
        <Controls>
          {icons.map(([label, d], i) => (
            <RoundButton key={label} aria-label={label} $first={i === 0}>
              <svg width="36" height="36" viewBox="0 0 36 36" fill="none" stroke="#555" strokeWidth="3"><path d={d} /></svg>
            </RoundButton>
          ))}
        </Controls>
      </ChartBox>
      <DateAxis />

      <ChartBox>
        <VolumeHead>
          <Picker $w={170}>成交量<Caret /></Picker>
          <VolumeLegend $gap={20}>
            <span>量:207.38万</span><span>MA5:214.83万</span><Tint $c="#9900ff">10:256.44万</Tint><span>换手:9.318%</span>
          </VolumeLegend>
        </VolumeHead>
        <VolumeChart />
        <Watermark>
          <svg width="42" height="42" viewBox="0 0 42 42" fill="none">
            <path d="M17 11C9 13 1 21 1 29C1 36 9 40 17 40C28 40 36 34 36 28C36 24 33 22 30 21C31 17 29 14 22 17C23 12 21 10 17 11Z" fill="#fff" fillOpacity="0.9" />
            <ellipse cx="17" cy="29" rx="12" ry="8.500" fill="#3b7a3b" />
            <circle cx="16" cy="30" r="6" fill="#fff" />
            <circle cx="14" cy="31" r="2.500" fill="#3b7a3b" />
            <path d="M27 3C35 1 42 9 39 17M28 9C32 8 35 12 34 16" stroke="#fff" strokeWidth="3" strokeLinecap="round" />
          </svg>
          <span>@Aster存钱罐罐</span>
        </Watermark>
      </ChartBox>
    </Page>
  );
}
